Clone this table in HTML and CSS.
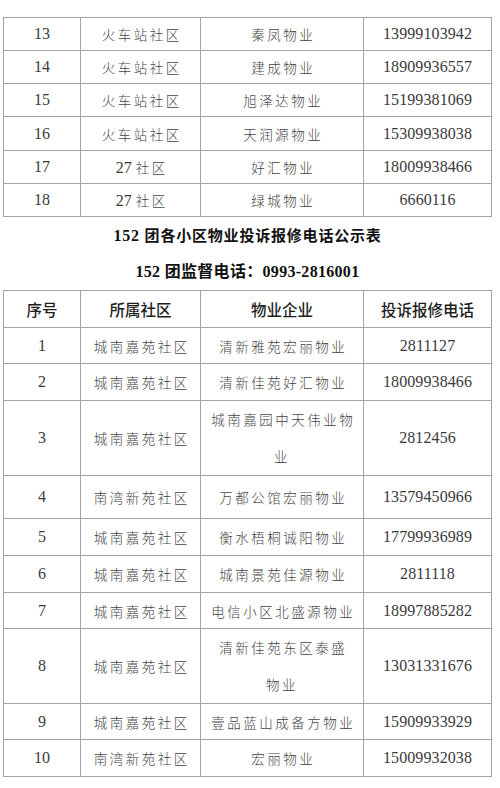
FILE: index.html
```html
<!DOCTYPE html>
<html lang="zh-CN">
<head>
<meta charset="utf-8">
<title>152团各小区物业投诉报修电话公示表</title>
<link rel="stylesheet" href="styles.css">
</head>
<body>
<div class="page">
  <table class="grid grid-top">
    <colgroup><col class="c1"><col class="c2"><col class="c3"><col class="c4"></colgroup>
    <tbody>
      <tr class="h33"><td class="num">13</td><td class="cn">火车站社区</td><td class="cn">秦凤物业</td><td class="num">13999103942</td></tr>
      <tr class="h33"><td class="num">14</td><td class="cn">火车站社区</td><td class="cn">建成物业</td><td class="num">18909936557</td></tr>
      <tr class="h33"><td class="num">15</td><td class="cn">火车站社区</td><td class="cn">旭泽达物业</td><td class="num">15199381069</td></tr>
      <tr class="h34"><td class="num">16</td><td class="cn">火车站社区</td><td class="cn">天润源物业</td><td class="num">15309938038</td></tr>
      <tr class="h33"><td class="num">17</td><td class="cn"><span class="d">27 </span>社区</td><td class="cn">好汇物业</td><td class="num">18009938466</td></tr>
      <tr class="h33"><td class="num">18</td><td class="cn"><span class="d">27 </span>社区</td><td class="cn">绿城物业</td><td class="num">6660116</td></tr>
    </tbody>
  </table>

  <div class="heading">
    <h1 class="title"><span class="bd">152 </span>团各小区物业投诉报修电话公示表</h1>
    <p class="subtitle"><span class="bd">152 </span>团监督电话：<span class="bd">0993-2816001</span></p>
  </div>

  <table class="grid grid-main">
    <colgroup><col class="c1"><col class="c2"><col class="c3"><col class="c4"></colgroup>
    <thead>
      <tr class="h37"><th>序号</th><th>所属社区</th><th>物业企业</th><th>投诉报修电话</th></tr>
    </thead>
    <tbody>
      <tr class="h36"><td class="num">1</td><td class="cn">城南嘉苑社区</td><td class="cn">清新雅苑宏丽物业</td><td class="num">2811127</td></tr>
      <tr class="h37"><td class="num">2</td><td class="cn">城南嘉苑社区</td><td class="cn">清新佳苑好汇物业</td><td class="num">18009938466</td></tr>
      <tr class="h72"><td class="num">3</td><td class="cn">城南嘉苑社区</td><td class="cn two">城南嘉园中天伟业物<br>业</td><td class="num">2812456</td></tr>
      <tr class="h43"><td class="num">4</td><td class="cn">南湾新苑社区</td><td class="cn">万都公馆宏丽物业</td><td class="num">13579450966</td></tr>
      <tr class="h37"><td class="num">5</td><td class="cn">城南嘉苑社区</td><td class="cn">衡水梧桐诚阳物业</td><td class="num">17799936989</td></tr>
      <tr class="h37"><td class="num">6</td><td class="cn">城南嘉苑社区</td><td class="cn">城南景苑佳源物业</td><td class="num">2811118</td></tr>
      <tr class="h36"><td class="num">7</td><td class="cn">城南嘉苑社区</td><td class="cn">电信小区北盛源物业</td><td class="num">18997885282</td></tr>
      <tr class="h74"><td class="num">8</td><td class="cn">城南嘉苑社区</td><td class="cn two">清新佳苑东区泰盛<br>物业</td><td class="num">13031331676</td></tr>
      <tr class="h36"><td class="num">9</td><td class="cn">城南嘉苑社区</td><td class="cn">壹品蓝山成备方物业</td><td class="num">15909933929</td></tr>
      <tr class="h37"><td class="num">10</td><td class="cn">南湾新苑社区</td><td class="cn">宏丽物业</td><td class="num">15009932038</td></tr>
    </tbody>
  </table>
</div>
</body>
</html>
```

FILE: styles.css
```css
html, body {
  margin: 0;
  padding: 0;
  background: #ffffff;
}

.page {
  width: 500px;
  padding: 17px 0 0 3px;
  box-sizing: border-box;
  color: #3a3a3a;
  font-family: "Liberation Serif", "Noto Sans CJK SC", serif;
}

.grid {
  width: 489px;
  border-collapse: collapse;
  table-layout: fixed;
}

.grid td,
.grid th {
  border: 1px solid #a3a3a3;
  padding: 0;
  text-align: center;
  vertical-align: middle;
  white-space: nowrap;
}

.c1 { width: 77px; }
.c2 { width: 120px; }
.c3 { width: 163px; }
.c4 { width: 128px; }

.num {
  font-family: "Liberation Serif", serif;
  font-size: 16px;
  letter-spacing: 0.1px;
  color: #3a3a3a;
}

.cn {
  font-family: "Noto Sans CJK SC", sans-serif;
  font-weight: 300;
  font-size: 13.5px;
  letter-spacing: 2.5px;
  text-indent: 2.5px;
  color: #444444;
}

.cn .d {
  font-family: "Liberation Serif", serif;
  font-size: 16px;
  font-weight: 400;
  letter-spacing: 0;
  color: #3a3a3a;
}

.two {
  line-height: 37px;
}

.grid th {
  font-family: "Noto Sans CJK SC", sans-serif;
  font-weight: 500;
  font-size: 15.5px;
  color: #1e1e1e;
}

.h33 { height: 33px; }
.h34 { height: 34px; }
.h36 { height: 36px; }
.h37 { height: 37px; }
.h43 { height: 43px; }
.h72 { height: 72px; }
.h74 { height: 74px; }

.heading {
  width: 489px;
  text-align: center;
  color: #111111;
  margin-bottom: 2px;
}

.title,
.subtitle {
  margin: 0;
  font-family: "Noto Sans CJK SC", sans-serif;
  font-weight: 700;
}

.title {
  height: 35px;
  line-height: 35px;
  font-size: 15px;
  letter-spacing: 0.8px;
}

.subtitle {
  height: 36px;
  line-height: 36px;
  font-size: 16px;
  letter-spacing: 0.3px;
}

.bd {
  font-family: "Liberation Serif", serif;
  font-weight: 700;
  font-size: 16px;
}
```
